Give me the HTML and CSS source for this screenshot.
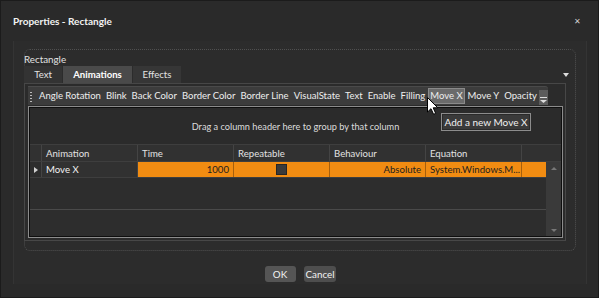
FILE: index.html
```html
<!DOCTYPE html>
<html lang="en">

<head>
    <meta charset="utf-8">
    <title>Properties - Rectangle</title>
    <link rel="stylesheet" href="styles.css">
</head>

<body>
    <div class="window">
        <div class="titlebar">
            <span class="title">Properties - Rectangle</span>
            <span class="close">&#x2715;</span>
        </div>
        <div class="panel">
            <div class="frame">
                <div class="caption">Rectangle</div>
                <div class="tabs">
                    <span class="tab t-text">Text</span>
                    <span class="tab t-anim active">Animations</span>
                    <span class="tab t-fx">Effects</span>
                    <span class="tabmenu"></span>
                </div>
                <div class="tabbody">
                    <div class="toolbar">
                        <span class="grip"></span>
                        <span class="tool">Angle Rotation</span>
                        <span class="tool">Blink</span>
                        <span class="tool">Back Color</span>
                        <span class="tool">Border Color</span>
                        <span class="tool">Border Line</span>
                        <span class="tool">VisualState</span>
                        <span class="tool">Text</span>
                        <span class="tool">Enable</span>
                        <span class="tool">Filling</span>
                        <span class="tool hover">Move X</span>
                        <span class="tool">Move Y</span>
                        <span class="tool">Opacity</span>
                        <span class="overflow">
                            <svg width="7" height="6" viewBox="0 0 7 6">
                                <rect x="0" y="0" width="7" height="1" fill="#ddd" />
                                <path d="M0 3 L7 3 L3.5 6 Z" fill="#ddd" />
                            </svg>
                        </span>
                    </div>
                    <div class="grid">
                        <div class="grouppanel">Drag a column header here to group by that column</div>
                        <div class="row head">
                            <span class="sel"></span>
                            <span class="cell">Animation</span>
                            <span class="cell">Time</span>
                            <span class="cell">Repeatable</span>
                            <span class="cell">Behaviour</span>
                            <span class="cell">Equation</span>
                            <span class="cell rest"></span>
                        </div>
                        <div class="gridbody">
                            <div class="rows">
                                <div class="row data">
                                    <span class="sel"><i class="arrow"></i></span>
                                    <span class="cell name">Move X</span>
                                    <span class="cell hi num">1000</span>
                                    <span class="cell hi center"><i class="check"></i></span>
                                    <span class="cell hi num">Absolute</span>
                                    <span class="cell hi">System.Windows.M...</span>
                                    <span class="cell hi rest"></span>
                                </div>
                                <div class="filler"></div>
                            </div>
                            <div class="scrollbar">
                                <i class="sb-up"></i>
                                <i class="sb-down"></i>
                            </div>
                        </div>
                    </div>
                </div>
            </div>
            <div class="buttons">
                <button class="btn ok">OK</button>
                <button class="btn">Cancel</button>
            </div>
        </div>

        <div class="tooltip">Add a new Move X</div>
        <svg class="cursor" width="12" height="18" viewBox="0 0 12 18">
            <path d="M0.5 0.5 L0.5 15 L4 11.7 L6.6 17.3 L8.7 16.4 L6.2 10.8 L10.8 10.8 Z" fill="#fff" stroke="#000" stroke-width="1" />
        </svg>
    </div>
</body>

</html>
```

FILE: styles.css
```css
* {
    box-sizing: border-box;
}

body {
    margin: 0;
    background-color: #1c1c1c;
    font-family: Lato, "Open Sans", sans-serif;
    font-size: 9.5px;
    color: #e2e2e2;
}

.window {
    position: relative;
    width: 599px;
    height: 298px;
    background-color: #2a2a2a;
    border: 1px solid #1b1b1b;
}

.titlebar {
    display: flex;
    align-items: center;
    justify-content: space-between;
    height: 40px;
    padding: 0 17px 0 12px;
}

.title {
    font-weight: bold;
    font-size: 10px;
    color: #f2f2f2;
}

.close {
    font-size: 8px;
    color: #cfcfcf;
}

.panel {
    width: 574px;
    height: 243px;
    margin-left: 12px;
    background-color: #2c2c2c;
    border-left: 1px solid #343434;
    border-right: 1px solid #343434;
    padding-top: 8px;
}

.frame {
    width: 552px;
    height: 202px;
    margin-left: 10px;
    border: 1px dotted #505050;
    border-radius: 6px;
}

.caption {
    margin-left: -1px;
    padding-top: 3px;
    height: 16px;
    line-height: 13px;
    font-size: 9.8px;
}

.tabs {
    display: flex;
    align-items: stretch;
    height: 17px;
    margin-left: -1px;
}

.tab {
    display: flex;
    align-items: center;
    justify-content: center;
    background-color: #333;
    margin-right: 1px;
    font-size: 9.6px;
}

.t-text {
    width: 38px;
}

.t-anim {
    width: 69px;
}

.t-fx {
    width: 48px;
    background-color: #363636;
}

.tab.active {
    background-color: #4a4a4a;
    font-weight: bold;
    color: #fff;
}

.tabmenu {
    margin-left: auto;
    margin-right: 6px;
    align-self: center;
    width: 0;
    height: 0;
    border-left: 3px solid transparent;
    border-right: 3px solid transparent;
    border-top: 4px solid #ddd;
}

.tabbody {
    width: 542px;
    height: 158px;
    margin-left: -1px;
    border: 1px solid #474747;
    background-color: #2b2b2b;
    padding: 2px 0 0 3px;
}

.toolbar {
    display: flex;
    align-items: center;
    width: 520px;
    height: 19px;
    background-color: #3c3c3c;
    border-top: 1px solid #4a4a4a;
    border-radius: 0 3px 0 0;
    padding-left: 2px;
    position: relative;
}

.grip {
    width: 2px;
    height: 11px;
    margin-right: 5px;
    background-image: radial-gradient(circle, #bbb 0.8px, transparent 1px);
    background-size: 2px 3px;
}

.tool {
    padding: 1px 1px 2px 1px;
    margin-right: 1px;
    white-space: nowrap;
    font-size: 9.5px;
    color: #eee;
    border: 1px solid transparent;
}

.tool.hover {
    background-color: #6b6b6b;
    border-color: #8a8a8a;
}

.overflow {
    position: absolute;
    right: 0;
    top: 3px;
    width: 9px;
    height: 15px;
    background-color: #5c5c5c;
    display: flex;
    align-items: flex-end;
    justify-content: center;
    padding-bottom: 2px;
}

.overflow svg {
    display: block;
}

.grid {
    width: 535px;
    height: 132px;
    margin-top: 1px;
    border: 1px solid #8c8c8c;
    box-shadow: inset 0 0 0 1px #0e0e0e;
    padding: 1px;
    display: flex;
    flex-direction: column;
}

.grouppanel {
    height: 37px;
    display: flex;
    align-items: center;
    justify-content: center;
    border-bottom: 1px solid #3e3e3e;
    color: #dcdcdc;
    font-size: 9.2px;
}

.row {
    display: flex;
    height: 17px;
}

.head {
    background-color: #313131;
    border-bottom: 1px solid #3e3e3e;
}

.sel {
    width: 12px;
    flex: none;
    border-right: 1px solid #444;
    display: flex;
    align-items: center;
    justify-content: center;
}

.cell {
    width: 96px;
    flex: none;
    display: flex;
    align-items: center;
    padding: 0 4px;
    border-right: 1px solid #444;
    font-size: 9.6px;
    white-space: nowrap;
}

.head .rest {
    flex: 1;
    border-right: none;
}

.gridbody {
    flex: 1;
    display: flex;
}

.rows {
    flex: 1;
    background-color: #2d2d2d;
}

.data {
    height: 16px;
    border-bottom: 1px solid #3e3e3e;
}

.data .name {
    background-color: #313131;
    color: #f2f2f2;
}

.cell.hi {
    background-color: #f18c12;
    color: #1e1e1e;
    border-right-color: #a65f0c;
}

.num {
    justify-content: flex-end;
}

.center {
    justify-content: center;
}

.data .rest {
    width: 24px;
    border-right: none;
}

.arrow {
    width: 0;
    height: 0;
    border-top: 3px solid transparent;
    border-bottom: 3px solid transparent;
    border-left: 4px solid #d0d0d0;
}

.check {
    width: 11px;
    height: 11px;
    background-color: #3a3a3a;
    border: 1px solid #262626;
}

.filler {
    height: 32px;
    border-bottom: 1px solid #4a4a4a;
}

.scrollbar {
    width: 15px;
    background-color: #3a3a3a;
    display: flex;
    flex-direction: column;
    justify-content: space-between;
    align-items: center;
    padding: 5px 0 4px;
}

.sb-up {
    width: 0;
    height: 0;
    border-left: 3px solid transparent;
    border-right: 3px solid transparent;
    border-bottom: 3px solid #777;
}

.sb-down {
    width: 0;
    height: 0;
    border-left: 3px solid transparent;
    border-right: 3px solid transparent;
    border-top: 3px solid #777;
}

.buttons {
    display: flex;
    justify-content: center;
    gap: 8px;
    margin-top: 15px;
    padding-left: 1px;
}

.btn {
    height: 16px;
    padding: 0 2px;
    border: none;
    border-radius: 3px;
    background-color: #4e4e4e;
    color: #f2f2f2;
    font-family: inherit;
    font-size: 9.8px;
}

.btn.ok {
    width: 31px;
    background-color: #555;
}

.tooltip {
    position: absolute;
    left: 440px;
    top: 112px;
    width: 90px;
    height: 18px;
    background-color: #3a3a3a;
    border: 1px solid #8c8c8c;
    box-shadow: inset 0 0 0 1px #2a2a2a;
    display: flex;
    align-items: center;
    justify-content: center;
    font-size: 10px;
    color: #f0f0f0;
}

.cursor {
    position: absolute;
    left: 426px;
    top: 96px;
}
```
